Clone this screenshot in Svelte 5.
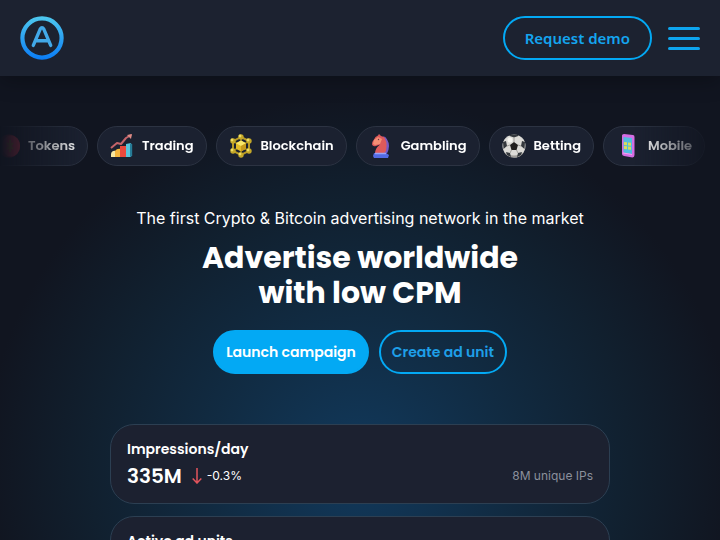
<script lang="ts">
  const categories = ["Tokens", "Trading", "Blockchain", "Gambling", "Betting", "Mobile"]

  const stats = [
    { title: "Impressions/day", value: "335M", change: "-0.3%", note: "8M unique IPs" },
    { title: "Active ad units" }
  ]

  // outer nodes of the blockchain icon
  const nodes = [[12, 3], [20, 7], [20, 17], [12, 21], [4, 17], [4, 7]]
</script>

<header>
  <a class="logo" href="/" aria-label="Home">
    <svg viewBox="0 0 44 44" width="44" height="44" fill="none">
      <defs>
        <linearGradient id="logo-fill" x1="0" y1="0" x2="0" y2="44" gradientUnits="userSpaceOnUse">
          <stop offset="0" stop-color="#4fc9ee" />
          <stop offset="1" stop-color="#0a7cf6" />
        </linearGradient>
      </defs>
      <circle cx="22" cy="22" r="19.6" stroke="url(#logo-fill)" stroke-width="4.2" />
      <path d="M13.3 29.4 20.2 13.2Q22 10 23.800 13.200L30.700 29.400M17 24.800H27" stroke="#42a9e8" stroke-width="3.4" stroke-linecap="round" stroke-linejoin="round" />
    </svg>
  </a>
  <div class="header-actions">
    <button class="btn outline demo">Request demo</button>
    <button class="menu" aria-label="Menu">
      <span></span>
      <span></span>
      <span></span>
    </button>
  </div>
</header>

<main>
  <div class="categories">
    <div class="track">
      {#each categories as name}
        <a class="category" href="/{name.toLowerCase()}">
          <svg viewBox="0 0 24 24" width="24" height="24" aria-hidden="true">
            {#if name == "Tokens"}
              <ellipse cx="13" cy="12" rx="11" ry="11.5" fill="#8e2638" />
              <ellipse cx="15" cy="12" rx="9" ry="10.5" fill="#c8334b" />
              <path d="M14 6v12M11 9l6 6M17 9l-6 6" stroke="#a86b2f" stroke-width="2" />
            {:else if name == "Trading"}
              <path d="M1 20q1-4 5-3v6H1z" fill="#f7e7a0" />
              <path d="M5 17q2-3 6-2v8H5z" fill="#f5b63d" />
              <path d="M10 12h6v11h-6z" fill="#e9493d" />
              <path d="M16 10l5-1v14h-5z" fill="#59c5dc" />
              <path d="M20 9.300l2.200.7v12l-2.200 1z" fill="#267b96" />
              <path d="M1 14l6-5 4 1 5-6 5-3" fill="none" stroke="#c4646a" stroke-width="2" stroke-linejoin="round" />
              <path d="M17 1l5-1-1 5z" fill="#df8c86" />
            {:else if name == "Blockchain"}
              <path d="M12 3l8 4v10l-8 4-8-4V7z" fill="none" stroke="#b79a25" stroke-width="2" />
              <path d="M12 3v18M4 7l16 10M20 7L4 17" stroke="#8c771d" stroke-width="1.500" />
              <path d="M12 6.500l5 2.700v5.600l-5 2.700-5-2.700V9.200z" fill="#e3bc28" />
              <path d="M12 6.500l5 2.700-5 2.800-5-2.800z" fill="#f8e769" />
              <path d="M12 12l5-2.800v5.600l-5 2.700z" fill="#c69a1c" />
              {#each nodes as [x, y]}
                <circle cx={x} cy={y} r="2.700" fill="#c4a728" />
                <circle cx={x - 1} cy={y - 1} r="1.400" fill="#f0df62" />
              {/each}
            {:else if name == "Gambling"}
              <path d="M5 19h12l3 2-1 3H5l-1-2z" fill="#536be4" />
              <path d="M6 19.500q0-5 5-9l-4 1.500q-3 1-4-1.500 0-3 2-5 1-3 4-4l1-1.500 2 2q7 1 7 9 0 6-3 8.500z" fill="#de5a5b" />
              <path d="M14 2q5 4 3 15l-2 2.500h3q4-8 0-14-1-3-4-3.500z" fill="#775ac7" />
              <path d="M5 6l4-3 4 2-2 5-5 1-2-1z" fill="#f48f74" />
              <circle cx="9.500" cy="5.500" r=".7" fill="#742e45" />
              <path d="M6 19.500h11" stroke="#9ba3f5" stroke-width="1.500" />
            {:else if name == "Betting"}
              <circle cx="12" cy="12" r="11.500" fill="#dcdbd7" />
              <path d="M2 18q10 7 20 0-3 5.500-10 5.500T2 18z" fill="#a09e9a" />
              <path d="M12 8l4 3-1.500 5h-5L8 11z" fill="#211f1e" />
              <path d="M7 1.700l5 1.800 5-1.800-2-1.200H9zM1 8l3-1 1 5-3.500 3zM23 8l-3-1-1 5 3.500 3zM4 18l4 1 1 4-4-2zM20 18l-4 1-1 4 4-2z" fill="#34383d" />
              <path d="M12 3.500V8M5 12l3-1M19 12l-3-1M8 19l1.500-3M16 19l-1.500-3" stroke="#918e8a" stroke-width=".8" />
              <circle cx="8" cy="6" r="2.500" fill="#f5f4ef" />
            {:else}
              <path d="M6 1.500Q6 0 8 0l9 1q1.500.2 1.500 2v18q0 2-2 2.500L8 22q-2-.4-2-2z" fill="#d46de3" />
              <path d="M7.500 3l8.500 1v16l-8.500-1.500z" fill="#51bddf" />
              <path d="M8 8l3 .3v3L8 11zM12 8.400l3 .3v3l-3-.3zM8 12l3 .3v3L8 15zM12 12.400l3 .3v3l-3-.3z" fill="#d8dd5c" />
              <path d="M7 19l9 1.500" stroke="#f3a5ee" />
            {/if}
          </svg>
          {name}
        </a>
      {/each}
    </div>
  </div>

  <section class="hero">
    <p>The first Crypto &amp; Bitcoin advertising network in the market</p>
    <h1>Advertise worldwide<br />with low CPM</h1>
    <div class="hero-buttons">
      <button class="btn solid">Launch campaign</button>
      <button class="btn outline">Create ad unit</button>
    </div>
  </section>

  <section class="stats">
    {#each stats as stat}
      <article>
        <h2>{stat.title}</h2>
        {#if stat.value}
          <div class="row">
            <strong>{stat.value}</strong>
            <svg viewBox="0 0 10 16" width="10" height="16" fill="none" stroke="#e2545c" stroke-width="1.500" aria-hidden="true">
              <path d="M5 0v15M.7 10.500L5 15l4.300-4.500" />
            </svg>
            <span>{stat.change}</span>
            <span class="note">{stat.note}</span>
          </div>
        {/if}
      </article>
    {/each}
  </section>
</main>

<style>
  :global(body) {
    margin: 0;
    background: #111520;
    color: #fff;
    font-family: Inter, "Liberation Sans", sans-serif;
    overflow-x: hidden;
  }

  header {
    position: relative;
    display: flex;
    align-items: center;
    justify-content: space-between;
    padding: 16px 20px;
    background: #1c2230;
    box-shadow: 0 4px 20px rgba(0, 0, 0, 0.3);
  }

  .logo {
    display: flex;
  }

  .header-actions {
    display: flex;
    align-items: center;
    gap: 16px;
  }

  .btn {
    box-sizing: border-box;
    height: 44px;
    padding: 0 11px;
    border: 2px solid #03a9f4;
    border-radius: 22px;
    font: 600 14px Poppins, Inter, sans-serif;
    white-space: nowrap;
  }

  .solid {
    background: #03a9f4;
    color: #fff;
  }

  .outline {
    background: transparent;
    color: #1e9fe8;
  }

  .demo {
    padding: 0 20px;
    color: #14a5ef;
    font: 600 15px "Noto Sans", sans-serif;
  }

  .menu {
    display: flex;
    flex-direction: column;
    gap: 7px;
    width: 32px;
    padding: 0;
    border: 0;
    background: none;
  }

  .menu span {
    height: 3px;
    border-radius: 2px;
    background: #0ea5ee;
  }

  main {
    padding: 50px 0 36px;
    background: radial-gradient(ellipse 375px 370px at 50% 390px, #11395c 0%, #112b42 40%, #11202f 72%, #111520 100%);
  }

  .categories {
    overflow: hidden;
    -webkit-mask-image: linear-gradient(90deg, transparent, #000 12%, #000 88%, transparent);
    mask-image: linear-gradient(90deg, transparent, #000 12%, #000 88%, transparent);
  }

  .track {
    display: flex;
    gap: 9px;
    margin-left: -17px;
  }

  .category {
    box-sizing: border-box;
    display: flex;
    flex: none;
    align-items: center;
    gap: 8px;
    height: 40px;
    padding: 0 12px;
    border: 1px solid #2c3342;
    border-radius: 20px;
    background: #1b2130;
    color: #fff;
    font: 600 13px Poppins, Inter, sans-serif;
    text-decoration: none;
  }

  .hero {
    margin-top: 40px;
    text-align: center;
  }

  .hero p {
    margin: 0 0 10px;
    font-size: 16px;
    line-height: 24px;
  }

  h1 {
    margin: 0 0 20px;
    font: 700 30px/35px Poppins, Inter, sans-serif;
  }

  .hero-buttons {
    display: flex;
    justify-content: center;
    gap: 10px;
  }

  .stats {
    display: grid;
    gap: 12px;
    max-width: 500px;
    margin: 50px auto 0;
  }

  article {
    box-sizing: border-box;
    min-height: 80px;
    padding: 12px 16px;
    border: 1px solid #2c3f52;
    border-radius: 24px;
    background: #1c2130;
  }

  h2 {
    margin: 0;
    font: 600 14px/24px Poppins, Inter, sans-serif;
  }

  .row {
    display: flex;
    align-items: center;
    font-size: 12px;
    line-height: 30px;
  }

  .row strong {
    margin-right: 10px;
    font: 600 20px/30px Poppins, Inter, sans-serif;
  }

  .row svg {
    margin-right: 5px;
  }

  .note {
    margin-left: auto;
    color: #8b909c;
  }
</style>
